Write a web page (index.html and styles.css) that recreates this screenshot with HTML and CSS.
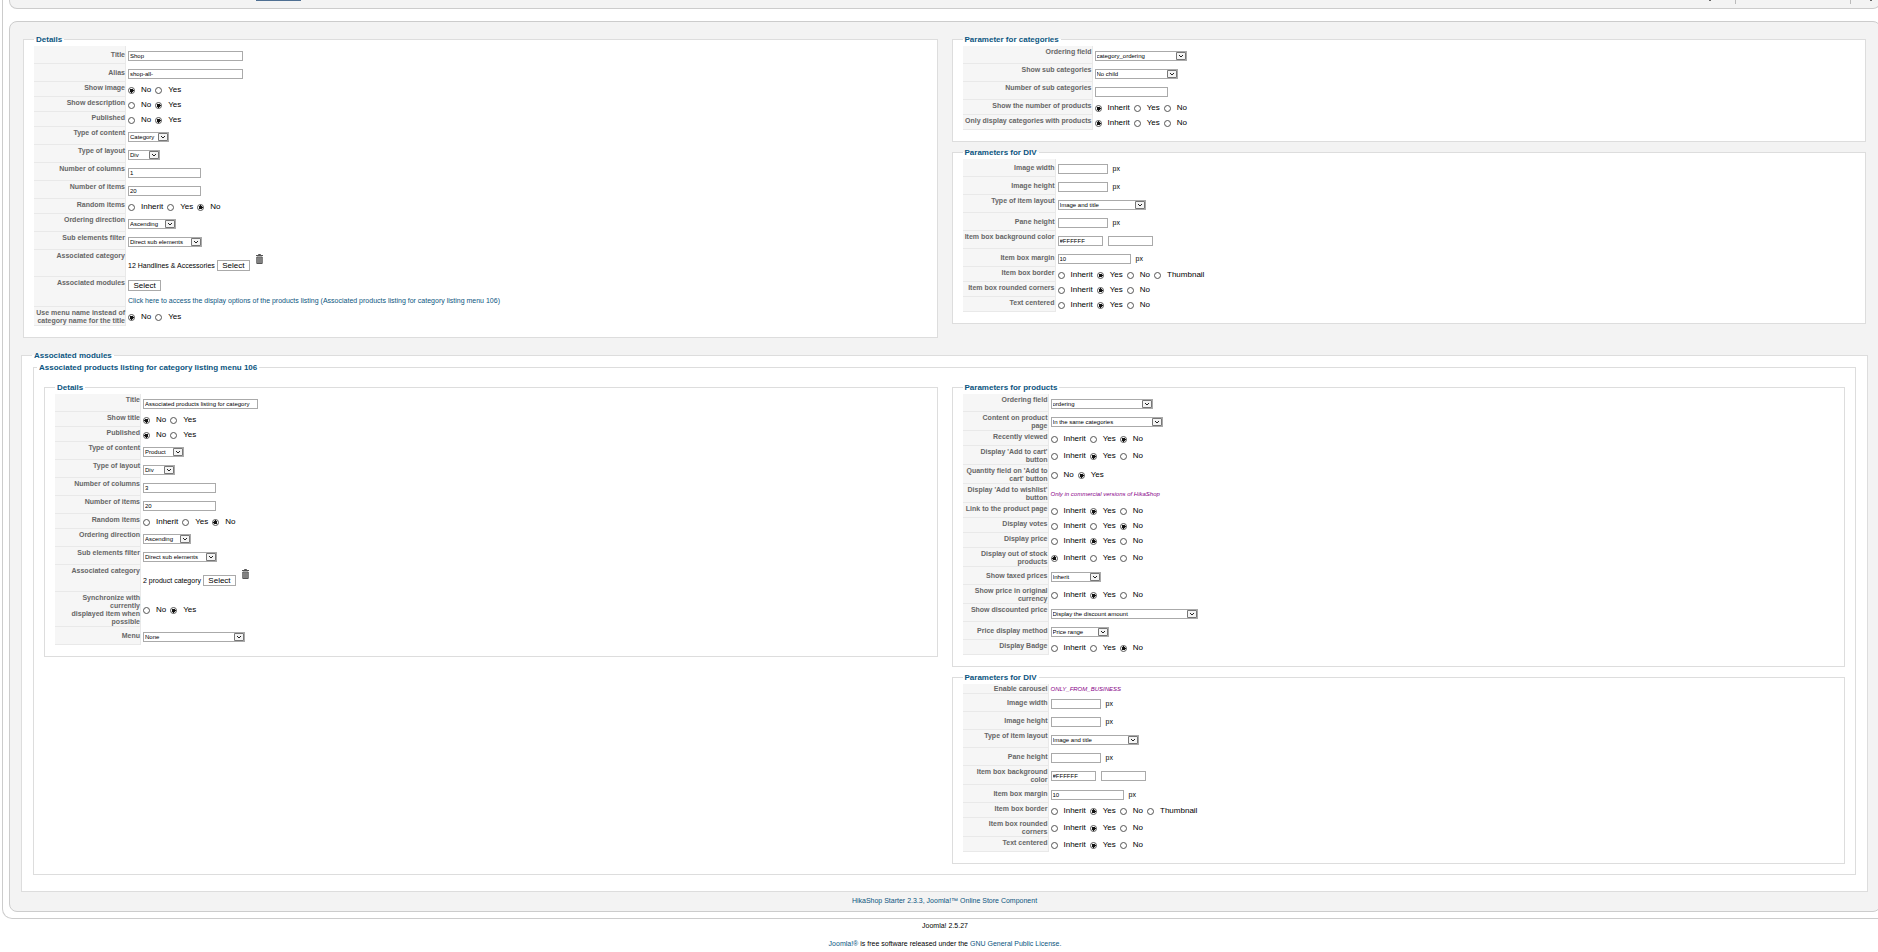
FILE: index.html
```html
<!DOCTYPE html>
<html lang="en">
<head>
<meta charset="utf-8">
<title>Shop menu options</title>
<link rel="stylesheet" href="styles.css">
</head>
<body>
<div class="frame">
<header class="toolbar"><span class="tab"></span><span class="marks"><i class="dot"></i><i class="bar"></i><i class="bar far"></i><i class="dot"></i></span></header>
<main class="panel">
<form>
<div class="columns">
<fieldset class="box">
<legend>Details</legend>
<table class="opts w92">
<tr class="field mid"><th scope="row"><label for="t1">Title</label></th><td><input type="text" class="title" id="t1" value="Shop"></td></tr>
<tr class="field mid"><th scope="row"><label for="al">Alias</label></th><td><input type="text" class="title" id="al" value="shop-all-"></td></tr>
<tr class="pick"><th scope="row">Show image</th><td><label><input type="radio" name="a1" checked>No</label><label><input type="radio" name="a1">Yes</label></td></tr>
<tr class="pick"><th scope="row">Show description</th><td><label><input type="radio" name="a2">No</label><label><input type="radio" name="a2" checked>Yes</label></td></tr>
<tr class="pick"><th scope="row">Published</th><td><label><input type="radio" name="a3">No</label><label><input type="radio" name="a3" checked>Yes</label></td></tr>
<tr class="field"><th scope="row"><label for="c1">Type of content</label></th><td><select id="c1" class="s41"><option>Category</option></select></td></tr>
<tr class="field"><th scope="row"><label for="l1">Type of layout</label></th><td><select id="l1" class="s32"><option>Div</option></select></td></tr>
<tr class="field"><th scope="row"><label for="n1">Number of columns</label></th><td><input type="text" class="num" id="n1" value="1"></td></tr>
<tr class="field"><th scope="row"><label for="i1">Number of items</label></th><td><input type="text" class="num" id="i1" value="20"></td></tr>
<tr class="pick"><th scope="row">Random items</th><td><label><input type="radio" name="a4">Inherit</label><label><input type="radio" name="a4">Yes</label><label><input type="radio" name="a4" checked>No</label></td></tr>
<tr class="field"><th scope="row"><label for="o1">Ordering direction</label></th><td><select id="o1" class="s48"><option>Ascending</option></select></td></tr>
<tr class="field"><th scope="row"><label for="s1">Sub elements filter</label></th><td><select id="s1" class="s74"><option>Direct sub elements</option></select></td></tr>
<tr class="category"><th scope="row">Associated category</th><td><div class="line"><span>12 Handlines &amp; Accessories</span><button type="button">Select</button><svg class="trash" viewBox="0 0 7 10" role="img" aria-label="Delete"><path d="M2.5 1V.5h2V1M0 1.5h7M.8 3h5.4v6.5H.8z" fill="#999" stroke="#555"/><path d="M2.4 4v5M3.5 4v5M4.6 4v5" stroke="#666" stroke-width=".5"/></svg></div></td></tr>
<tr class="modules"><th scope="row">Associated modules</th><td><button type="button">Select</button><a href="#modules">Click here to access the display options of the products listing (Associated products listing for category listing menu 106)</a></td></tr>
<tr class="double"><th scope="row">Use menu name instead of category name for the title</th><td><label><input type="radio" name="a5" checked>No</label><label><input type="radio" name="a5">Yes</label></td></tr>
</table>
</fieldset>
<div class="stack">
<fieldset class="box">
<legend>Parameter for categories</legend>
<table class="opts w130">
<tr class="field"><th scope="row"><label for="of1">Ordering field</label></th><td><select id="of1" class="s92"><option>category_ordering</option></select></td></tr>
<tr class="field"><th scope="row"><label for="sc">Show sub categories</label></th><td><select id="sc" class="s83"><option>No child</option></select></td></tr>
<tr class="field"><th scope="row"><label for="nsc">Number of sub categories</label></th><td><input type="text" class="num" id="nsc"></td></tr>
<tr class="pick"><th scope="row">Show the number of products</th><td><label><input type="radio" name="b1" checked>Inherit</label><label><input type="radio" name="b1">Yes</label><label><input type="radio" name="b1">No</label></td></tr>
<tr class="pick"><th scope="row">Only display categories with products</th><td><label><input type="radio" name="b2" checked>Inherit</label><label><input type="radio" name="b2">Yes</label><label><input type="radio" name="b2">No</label></td></tr>
</table>
</fieldset>
<fieldset class="box">
<legend>Parameters for DIV</legend>
<table class="opts w93">
<tr class="field mid"><th scope="row"><label for="iw1">Image width</label></th><td><input type="text" class="size" id="iw1"><span class="unit">px</span></td></tr>
<tr class="field mid"><th scope="row"><label for="ih1">Image height</label></th><td><input type="text" class="size" id="ih1"><span class="unit">px</span></td></tr>
<tr class="field"><th scope="row"><label for="il1">Type of item layout</label></th><td><select id="il1" class="s88"><option>Image and title</option></select></td></tr>
<tr class="field mid"><th scope="row"><label for="ph1">Pane height</label></th><td><input type="text" class="size" id="ph1"><span class="unit">px</span></td></tr>
<tr class="field"><th scope="row"><label for="bg1">Item box background color</label></th><td><input type="text" class="color" id="bg1" value="#FFFFFF"><input type="text" class="color" aria-label="Color preview"></td></tr>
<tr class="field mid"><th scope="row"><label for="m1">Item box margin</label></th><td><input type="text" class="num" id="m1" value="10"><span class="unit">px</span></td></tr>
<tr class="pick"><th scope="row">Item box border</th><td><label><input type="radio" name="d1">Inherit</label><label><input type="radio" name="d1" checked>Yes</label><label><input type="radio" name="d1">No</label><label><input type="radio" name="d1">Thumbnail</label></td></tr>
<tr class="pick"><th scope="row">Item box rounded corners</th><td><label><input type="radio" name="d2">Inherit</label><label><input type="radio" name="d2" checked>Yes</label><label><input type="radio" name="d2">No</label></td></tr>
<tr class="pick"><th scope="row">Text centered</th><td><label><input type="radio" name="d3">Inherit</label><label><input type="radio" name="d3" checked>Yes</label><label><input type="radio" name="d3">No</label></td></tr>
</table>
</fieldset>
</div>
</div>
<fieldset class="modules-box" id="modules">
<legend>Associated modules</legend>
<fieldset class="listing-box">
<legend>Associated products listing for category listing menu 106</legend>
<div class="columns">
<fieldset class="box">
<legend>Details</legend>
<table class="opts w86">
<tr class="field"><th scope="row"><label for="t2">Title</label></th><td><input type="text" class="title" id="t2" value="Associated products listing for category"></td></tr>
<tr class="pick"><th scope="row">Show title</th><td><label><input type="radio" name="e1" checked>No</label><label><input type="radio" name="e1">Yes</label></td></tr>
<tr class="pick"><th scope="row">Published</th><td><label><input type="radio" name="e2" checked>No</label><label><input type="radio" name="e2">Yes</label></td></tr>
<tr class="field"><th scope="row"><label for="c2">Type of content</label></th><td><select id="c2" class="s41"><option>Product</option></select></td></tr>
<tr class="field"><th scope="row"><label for="l2">Type of layout</label></th><td><select id="l2" class="s32"><option>Div</option></select></td></tr>
<tr class="field"><th scope="row"><label for="n2">Number of columns</label></th><td><input type="text" class="num" id="n2" value="3"></td></tr>
<tr class="field"><th scope="row"><label for="i2">Number of items</label></th><td><input type="text" class="num" id="i2" value="20"></td></tr>
<tr class="pick"><th scope="row">Random items</th><td><label><input type="radio" name="e3">Inherit</label><label><input type="radio" name="e3">Yes</label><label><input type="radio" name="e3" checked>No</label></td></tr>
<tr class="field"><th scope="row"><label for="o2">Ordering direction</label></th><td><select id="o2" class="s48"><option>Ascending</option></select></td></tr>
<tr class="field"><th scope="row"><label for="s2">Sub elements filter</label></th><td><select id="s2" class="s74"><option>Direct sub elements</option></select></td></tr>
<tr class="category"><th scope="row">Associated category</th><td><div class="line"><span>2 product category</span><button type="button">Select</button><svg class="trash" viewBox="0 0 7 10" role="img" aria-label="Delete"><path d="M2.5 1V.5h2V1M0 1.5h7M.8 3h5.4v6.5H.8z" fill="#999" stroke="#555"/><path d="M2.4 4v5M3.5 4v5M4.6 4v5" stroke="#666" stroke-width=".5"/></svg></div></td></tr>
<tr class="sync"><th scope="row">Synchronize with currently<br>displayed item when possible</th><td><label><input type="radio" name="e4">No</label><label><input type="radio" name="e4" checked>Yes</label></td></tr>
<tr class="field mid"><th scope="row"><label for="menu">Menu</label></th><td><select id="menu" class="s102"><option>None</option></select></td></tr>
</table>
</fieldset>
<div class="stack">
<fieldset class="box">
<legend>Parameters for products</legend>
<table class="opts w86">
<tr class="field"><th scope="row"><label for="of2">Ordering field</label></th><td><select id="of2" class="s102"><option>ordering</option></select></td></tr>
<tr class="double"><th scope="row"><label for="cp">Content on product<br>page</label></th><td><select id="cp" class="s112"><option>In the same categories</option></select></td></tr>
<tr class="pick"><th scope="row">Recently viewed</th><td><label><input type="radio" name="f1">Inherit</label><label><input type="radio" name="f1">Yes</label><label><input type="radio" name="f1" checked>No</label></td></tr>
<tr class="double"><th scope="row">Display 'Add to cart' button</th><td><label><input type="radio" name="f2">Inherit</label><label><input type="radio" name="f2" checked>Yes</label><label><input type="radio" name="f2">No</label></td></tr>
<tr class="double"><th scope="row">Quantity field on 'Add to cart' button</th><td><label><input type="radio" name="f3">No</label><label><input type="radio" name="f3" checked>Yes</label></td></tr>
<tr class="double"><th scope="row">Display 'Add to wishlist' button</th><td><em>Only in commercial versions of HikaShop</em></td></tr>
<tr class="pick"><th scope="row">Link to the product page</th><td><label><input type="radio" name="f4">Inherit</label><label><input type="radio" name="f4" checked>Yes</label><label><input type="radio" name="f4">No</label></td></tr>
<tr class="pick"><th scope="row">Display votes</th><td><label><input type="radio" name="f5">Inherit</label><label><input type="radio" name="f5">Yes</label><label><input type="radio" name="f5" checked>No</label></td></tr>
<tr class="pick"><th scope="row">Display price</th><td><label><input type="radio" name="f6">Inherit</label><label><input type="radio" name="f6" checked>Yes</label><label><input type="radio" name="f6">No</label></td></tr>
<tr class="double"><th scope="row">Display out of stock products</th><td><label><input type="radio" name="f7" checked>Inherit</label><label><input type="radio" name="f7">Yes</label><label><input type="radio" name="f7">No</label></td></tr>
<tr class="field mid"><th scope="row"><label for="tp">Show taxed prices</label></th><td><select id="tp" class="s50"><option>Inherit</option></select></td></tr>
<tr class="double"><th scope="row">Show price in original currency</th><td><label><input type="radio" name="f8">Inherit</label><label><input type="radio" name="f8" checked>Yes</label><label><input type="radio" name="f8">No</label></td></tr>
<tr class="field"><th scope="row"><label for="dp">Show discounted price</label></th><td><select id="dp" class="s147"><option>Display the discount amount</option></select></td></tr>
<tr class="field mid"><th scope="row"><label for="pm">Price display method</label></th><td><select id="pm" class="s58"><option>Price range</option></select></td></tr>
<tr class="pick"><th scope="row">Display Badge</th><td><label><input type="radio" name="f9">Inherit</label><label><input type="radio" name="f9">Yes</label><label><input type="radio" name="f9" checked>No</label></td></tr>
</table>
</fieldset>
<fieldset class="box">
<legend>Parameters for DIV</legend>
<table class="opts w86">
<tr class="note"><th scope="row">Enable carousel</th><td><em>ONLY_FROM_BUSINESS</em></td></tr>
<tr class="field mid"><th scope="row"><label for="iw2">Image width</label></th><td><input type="text" class="size" id="iw2"><span class="unit">px</span></td></tr>
<tr class="field mid"><th scope="row"><label for="ih2">Image height</label></th><td><input type="text" class="size" id="ih2"><span class="unit">px</span></td></tr>
<tr class="field"><th scope="row"><label for="il2">Type of item layout</label></th><td><select id="il2" class="s88"><option>Image and title</option></select></td></tr>
<tr class="field mid"><th scope="row"><label for="ph2">Pane height</label></th><td><input type="text" class="size" id="ph2"><span class="unit">px</span></td></tr>
<tr class="double"><th scope="row"><label for="bg2">Item box background color</label></th><td><input type="text" class="color" id="bg2" value="#FFFFFF"><input type="text" class="color" aria-label="Color preview"></td></tr>
<tr class="field mid"><th scope="row"><label for="m2">Item box margin</label></th><td><input type="text" class="num" id="m2" value="10"><span class="unit">px</span></td></tr>
<tr class="pick"><th scope="row">Item box border</th><td><label><input type="radio" name="g1">Inherit</label><label><input type="radio" name="g1" checked>Yes</label><label><input type="radio" name="g1">No</label><label><input type="radio" name="g1">Thumbnail</label></td></tr>
<tr class="double"><th scope="row">Item box rounded corners</th><td><label><input type="radio" name="g2">Inherit</label><label><input type="radio" name="g2" checked>Yes</label><label><input type="radio" name="g2">No</label></td></tr>
<tr class="pick"><th scope="row">Text centered</th><td><label><input type="radio" name="g3">Inherit</label><label><input type="radio" name="g3" checked>Yes</label><label><input type="radio" name="g3">No</label></td></tr>
</table>
</fieldset>
</div>
</div>
</fieldset>
</fieldset>
</form>
<p class="credit"><a href="#hikashop">HikaShop Starter 2.3.3, Joomla!™ Online Store Component</a></p>
</main>
</div>
<footer>
<p>Joomla! 2.5.27</p>
<p><a href="#joomla">Joomla!®</a> is free software released under the <a href="#license">GNU General Public License.</a></p>
</footer>
</body>
</html>
```

FILE: styles.css
```css
* { box-sizing: border-box; }

body {
  margin: 0;
  overflow: hidden;
  background: #fff;
  color: #000;
  font: 7px/8px "Liberation Sans", Arial, sans-serif;
}

a { color: #0b5580; text-decoration: none; }
p { margin: 0; }

/* The frame is wider than the window, so its right edge is cut off */
.frame {
  margin: 0 -10px 0 2px;
  padding: 0 6px 6px;
  border: 1px solid #ccc;
  border-top: 0;
  border-radius: 0 0 10px 10px;
}

.toolbar {
  display: flex;
  justify-content: space-between;
  align-items: flex-start;
  height: 9px;
  padding: 0 8px 0 246px;
  background: #f3f3f3;
  border: 1px solid #ccc;
  border-top: 0;
  border-radius: 0 0 8px 8px;
}
.tab { width: 45px; height: 1px; background: #4f6f92; }
.marks { display: flex; align-items: flex-start; }
.dot { width: 2px; height: 1px; background: #666; }
.bar { width: 1px; height: 4px; margin-left: 24px; background: #bbb; }
.bar.far { margin: 0 19px 0 114px; }

.panel {
  margin-top: 12px;
  padding: 13px 12px 6px 11px;
  background: #f3f3f3;
  border: 1px solid #ccc;
  border-radius: 8px;
}

.columns {
  display: grid;
  grid-template-columns: 1fr 1fr;
  gap: 14px;
  align-items: start;
}
.panel form > .columns { padding: 0 2px; }
.stack { display: grid; gap: 6px; }

fieldset {
  min-width: 0;
  margin: 0;
  background: #fff;
  border: 1px solid #ddd;
}
legend {
  padding: 0 2px;
  color: #0b5580;
  font-size: 8px;
  font-weight: bold;
  line-height: 9px;
}
.box { padding: 2px 10px 11px; }
.modules-box { margin-top: 13px; padding: 3px 11px 16px; }
.modules-box > legend { margin-left: -1px; }
.listing-box { padding: 11px 10px 10px; }
.listing-box > legend { margin-left: -7px; }

.opts { border-spacing: 0; table-layout: fixed; width: 100%; }
.opts th, .opts td { padding: 0; }
.opts th {
  padding: 2px 0 0;
  background: #f6f6f6;
  border-right: 1px solid #e9e9e9;
  border-bottom: 1px solid #e9e9e9;
  color: #666;
  text-align: right;
  vertical-align: top;
}
.opts td { padding: 1px 0 0 2px; vertical-align: middle; white-space: nowrap; }
.opts .mid th { padding-top: 1px; vertical-align: middle; }
.w86 th { width: 86px; }
.w92 th { width: 92px; }
.w93 th { width: 93px; }
.w130 th { width: 130px; }

.field { height: 18px; }
.pick { height: 15px; }
.double { height: 19px; }
.category { height: 27px; }
.modules { height: 30px; }
.sync { height: 35px; }
.note { height: 10px; }
.opts .note th { padding-top: 1px; }

td label {
  display: inline-flex;
  align-items: center;
  gap: 6px;
  margin-right: 4px;
  font-size: 8px;
  line-height: 8px;
  vertical-align: middle;
}

input, select, button {
  appearance: none;
  margin: 0;
  background: #fff;
  border: 1px solid #aaa;
  border-radius: 0;
  color: #000;
  font-family: "Liberation Sans", Arial, sans-serif;
}
input[type="text"], select {
  display: inline-block;
  height: 10px;
  padding: 0 1px;
  font-size: 6px;
  line-height: 8px;
  vertical-align: middle;
}
input[type="radio"] {
  width: 7px;
  height: 7px;
  border-color: #555;
  border-radius: 50%;
}
input[type="radio"]:checked { background: radial-gradient(circle, #111 0 2px, #fff 2px); }

.title { width: 115px; }
.num { width: 73px; }
.size { width: 50px; }
.color { width: 45px; margin-right: 5px; }
.color + .color { margin-right: 0; }
.unit { margin-left: 5px; vertical-align: middle; }

select {
  background: #fff url("data:image/svg+xml,%3Csvg xmlns='http://www.w3.org/2000/svg' width='10' height='8'%3E%3Cpath d='M.5 .5h9v7h-9z' fill='%23f4f4f4' stroke='%23777'/%3E%3Cpath d='M3 3l2 2 2-2' fill='none' stroke='%23222'/%3E%3C/svg%3E") no-repeat right center;
}
.s32 { width: 32px; }
.s41 { width: 41px; }
.s48 { width: 48px; }
.s50 { width: 50px; }
.s58 { width: 58px; }
.s74 { width: 74px; }
.s83 { width: 83px; }
.s88 { width: 88px; }
.s92 { width: 92px; }
.s102 { width: 102px; }
.s112 { width: 112px; }
.s147 { width: 147px; }

button {
  width: 33px;
  height: 11px;
  padding: 0;
  font-size: 8px;
  line-height: 9px;
}
.line { display: flex; align-items: flex-end; gap: 2px; height: 20px; padding-bottom: 3px; }
.line span { padding-bottom: 1px; }
.trash { width: 7px; height: 10px; margin: 0 0 7px 4px; }
.modules button, .modules a { display: block; }
.modules a { margin-top: 6px; }

em { color: #808; font-size: 6px; vertical-align: middle; }

.credit { margin-top: 5px; text-align: center; }
footer { padding: 3px 0 0 12px; text-align: center; }
footer p + p { margin-top: 10px; }
```
